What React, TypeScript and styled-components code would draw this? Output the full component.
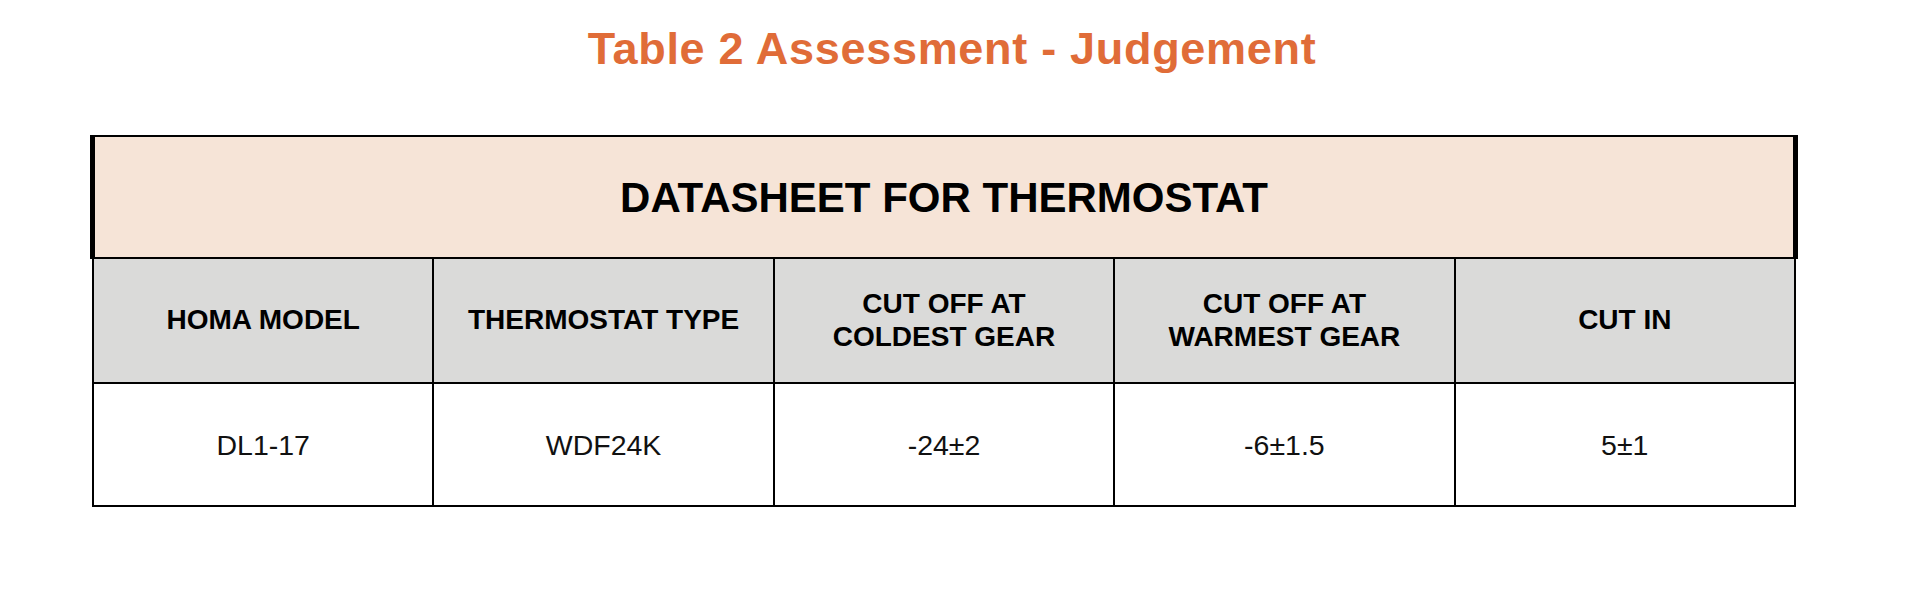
import React from "react";
import styled, { createGlobalStyle } from "styled-components";

const GlobalStyle = createGlobalStyle`
  html, body {
    margin: 0;
    padding: 0;
    background: #ffffff;
    font-family: "Liberation Sans", Arial, Helvetica, sans-serif;
  }
`;

const Page = styled.div`
  width: 1932px;
  height: 596px;
  box-sizing: border-box;
  padding: 23px 0 0 92px;
  background: #ffffff;
`;

const Heading = styled.h1`
  margin: 0;
  width: 1704px;
  box-sizing: border-box;
  padding-left: 16px;
  text-align: center;
  font-family: "Liberation Sans", Arial, Helvetica, sans-serif;
  font-weight: 700;
  font-size: 45px;
  line-height: 52px;
  letter-spacing: 0.7px;
  color: #e06c38;
`;

const Sheet = styled.div`
  margin-top: 60px;
  width: 1704px;
  display: flex;
  flex-direction: column;
`;

const SheetTitle = styled.div`
  height: 124px;
  margin: 0 -2px;
  box-sizing: border-box;
  border-top: 2px solid #000;
  border-bottom: 2px solid #000;
  border-left: 5px solid #000;
  border-right: 5px solid #000;
  background: #f6e4d7;
  display: flex;
  align-items: center;
  justify-content: center;
  font-weight: 700;
  font-size: 42px;
  padding-top: 2px;
  color: #000;
`;

const Row = styled.div<{ $head?: boolean; $height: number }>`
  display: grid;
  grid-template-columns: repeat(5, 1fr);
  height: ${(p) => p.$height}px;
  box-sizing: border-box;
  border-left: 2px solid #000;
  border-bottom: 2px solid #000;
  background: ${(p) => (p.$head ? "#dadad9" : "#ffffff")};
`;

const Cell = styled.div<{ $head?: boolean }>`
  border-right: 2px solid #000;
  display: flex;
  align-items: center;
  justify-content: center;
  text-align: center;
  font-weight: ${(p) => (p.$head ? 700 : 400)};
  font-size: ${(p) => (p.$head ? "28px" : "28.5px")};
  line-height: ${(p) => (p.$head ? "32.5px" : "34px")};
  color: ${(p) => (p.$head ? "#000" : "#111")};
`;

const heads: React.ReactNode[] = [
  "HOMA MODEL",
  "THERMOSTAT TYPE",
  <>
    CUT OFF AT
    <br />
    COLDEST GEAR
  </>,
  <>
    CUT OFF AT
    <br />
    WARMEST GEAR
  </>,
  "CUT IN",
];

const values = ["DL1-17", "WDF24K", "-24±2", "-6±1.5", "5±1"];

export default function App() {
  return (
    <>
      <GlobalStyle />
      <Page>
        <Heading>Table 2 Assessment - Judgement</Heading>
        <Sheet>
          <SheetTitle>DATASHEET FOR THERMOSTAT</SheetTitle>
          <Row $head $height={125}>
            {heads.map((h, i) => (
              <Cell $head key={i}>
                <span>{h}</span>
              </Cell>
            ))}
          </Row>
          <Row $height={123}>
            {values.map((v) => (
              <Cell key={v}>{v}</Cell>
            ))}
          </Row>
        </Sheet>
      </Page>
    </>
  );
}
